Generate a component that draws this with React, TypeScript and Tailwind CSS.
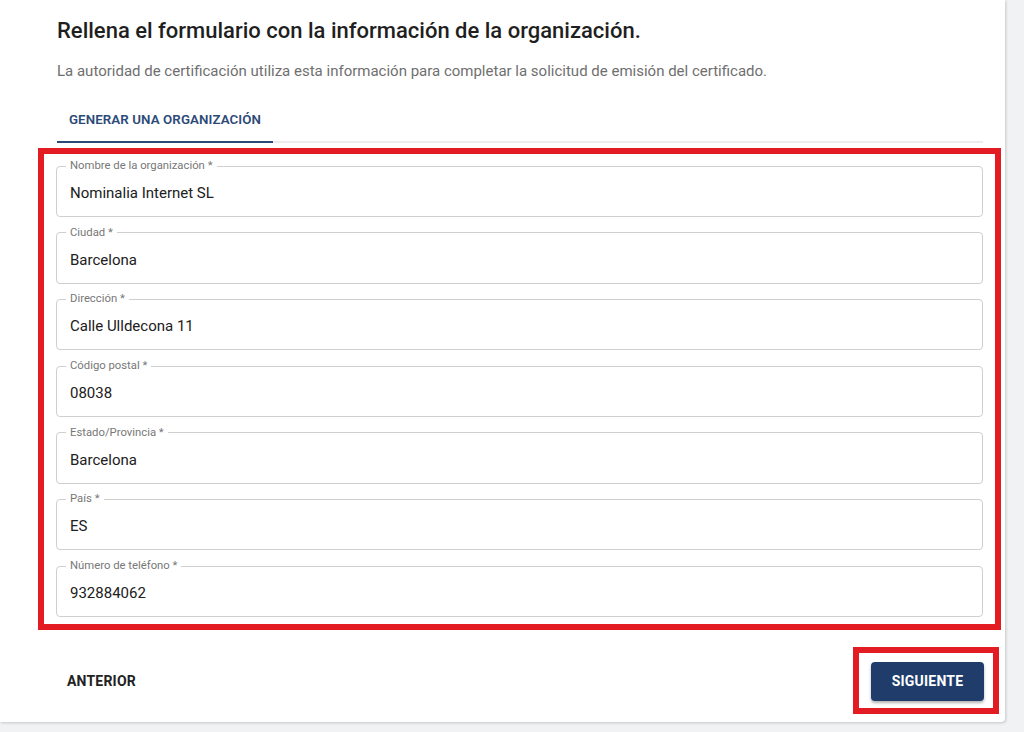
import React from "react";

const fields: { label: string; value: string }[] = [
  { label: "Nombre de la organización *", value: "Nominalia Internet SL" },
  { label: "Ciudad *", value: "Barcelona" },
  { label: "Dirección *", value: "Calle Ulldecona 11" },
  { label: "Código postal *", value: "08038" },
  { label: "Estado/Provincia *", value: "Barcelona" },
  { label: "País *", value: "ES" },
  { label: "Número de teléfono *", value: "932884062" },
];

function Field({ label, value }: { label: string; value: string }) {
  return (
    <fieldset className="m-0 min-w-0 rounded-[4px] border border-[#cfcfcf] px-[9px] pb-0 pt-0">
      <legend className="px-[4px] text-[11.3px] leading-[14px] text-[#777777]">{label}</legend>
      <div className="h-[43px] pl-[4px] pt-[10px] text-[15px] leading-[20px] text-[#202020]">{value}</div>
    </fieldset>
  );
}

export default function App() {
  return (
    <div
      className="h-[732px] w-[1024px] overflow-hidden bg-[#f1f2f4]"
      style={{ fontFamily: "Roboto, 'Liberation Sans', sans-serif" }}
    >
      <div className="flex h-[722px] w-[1005px] flex-col rounded-br-[4px] bg-white pl-[57px] pr-[22px] shadow-[1px_1px_3px_rgba(0,0,0,0.18)]">
        <h1 className="mt-[17px] text-[22px] font-medium leading-[28px] text-[#1f1f1f]">
          Rellena el formulario con la información de la organización.
        </h1>
        <p className="mt-[16px] text-[15px] leading-[20px] text-[#6f6f6f]">
          La autoridad de certificación utiliza esta información para completar la solicitud de emisión del certificado.
        </p>
        <div className="mt-[20px] border-b-2 border-[#ececec]">
          <div className="-mb-[2px] w-[216px] border-b-2 border-[#2c4a78] pb-[12px] pt-[10px] text-center text-[13.3px] font-semibold leading-[18px] tracking-[0.1px] text-[#2c4a78]">
            GENERAR UNA ORGANIZACIÓN
          </div>
        </div>
        <div className="-ml-[19px] -mr-[18px] mt-[5px] flex flex-col gap-[8.7px] border-[6.5px] border-[#e31b23] px-[12px] pb-[7px] pt-[5px]">
          {fields.map((f) => (
            <Field key={f.label} label={f.label} value={f.value} />
          ))}
        </div>
        <div className="mt-[17px] flex items-center justify-between">
          <button className="ml-[10px] text-[14px] font-bold leading-[18px] tracking-[0.2px] text-[#222222]">
            ANTERIOR
          </button>
          <div className="-mr-[16px] border-[6px] border-[#e31b23] pb-[7px] pl-[12px] pr-[9px] pt-[9px]">
            <button className="flex h-[39px] w-[113px] items-center justify-center rounded-[4px] bg-[#1f3c6b] text-[14px] font-bold tracking-[0.2px] text-white shadow-[0_2px_3px_rgba(0,0,0,0.3)]">
              SIGUIENTE
            </button>
          </div>
        </div>
      </div>
    </div>
  );
}
